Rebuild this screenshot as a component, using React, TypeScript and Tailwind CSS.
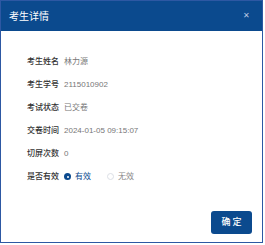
import React, { useState } from "react";

const fields = [
  { label: "考生姓名", value: "林力源" },
  { label: "考生学号", value: "2115010902" },
  { label: "考试状态", value: "已交卷" },
  { label: "交卷时间", value: "2024-01-05 09:15:07" },
  { label: "切屏次数", value: "0" },
];

const Radio = ({
  checked,
  label,
  onClick,
}: {
  checked: boolean;
  label: string;
  onClick: () => void;
}) => (
  <button className="flex items-center gap-[4px]" onClick={onClick}>
    <span
      className={
        checked
          ? "w-[7px] h-[7px] rounded-full bg-[#0b4a8e] flex items-center justify-center"
          : "w-[7px] h-[7px] rounded-full border border-[#dcdfe6] bg-white"
      }
    >
      {checked && <span className="w-[2px] h-[2px] rounded-full bg-white" />}
    </span>
    <span className={checked ? "text-[#0b4a8e]" : "text-[#888]"}>{label}</span>
  </button>
);

export default function App() {
  const [valid, setValid] = useState(true);

  return (
    <div className="w-[265px] h-[245px] bg-white font-['Liberation_Sans','Noto_Sans_CJK_SC',sans-serif]">
      <div className="w-[263px] h-[243px] border border-[#2d58a3] flex flex-col">
        <div className="h-[30px] bg-[#0b4a8e] flex items-center justify-between pl-[8px] pr-[12px]">
          <span className="text-[10px] text-white">考生详情</span>
          <span className="text-[8px] text-[#b9c9e2] leading-none">✕</span>
        </div>

        <div className="flex-1 flex flex-col pt-[19px] pl-[26px]">
          {fields.map((f) => (
            <div key={f.label} className="h-[23px] flex items-center text-[8px]">
              <span className="w-[37px] text-[#333] font-medium">{f.label}</span>
              <span className="text-[#777]">{f.value}</span>
            </div>
          ))}
          <div className="h-[23px] flex items-center text-[8px]">
            <span className="w-[37px] text-[#333] font-medium">是否有效</span>
            <div className="flex items-center gap-[16px]">
              <Radio checked={valid} label="有效" onClick={() => setValid(true)} />
              <Radio checked={!valid} label="无效" onClick={() => setValid(false)} />
            </div>
          </div>
        </div>

        <div className="flex justify-end pr-[10px] pb-[8px]">
          <button className="w-[41px] h-[23px] rounded-[3px] bg-[#0b4a8e] text-white text-[9px] font-medium tracking-[2px] pl-[2px]">
            确定
          </button>
        </div>
      </div>
    </div>
  );
}
